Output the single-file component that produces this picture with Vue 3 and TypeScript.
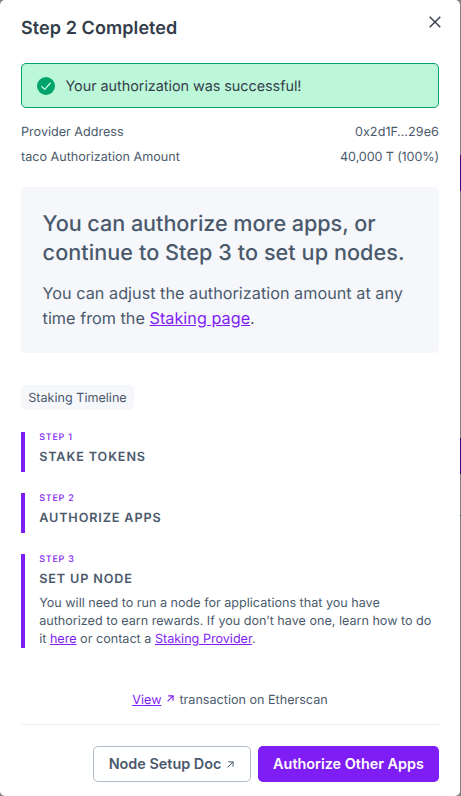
<script setup lang="ts">
interface Row {
  label: string
  value: string
  kind: 'address' | 'amount'
}

interface Step {
  label: string
  title: string
  detailed?: boolean
}

const rows: Row[] = [
  { label: 'Provider Address', value: '0x2d1F…29e6', kind: 'address' },
  { label: 'taco Authorization Amount', value: '40,000 T (100%)', kind: 'amount' },
]

const steps: Step[] = [
  { label: 'STEP 1', title: 'STAKE TOKENS' },
  { label: 'STEP 2', title: 'AUTHORIZE APPS' },
  { label: 'STEP 3', title: 'SET UP NODE', detailed: true },
]
</script>

<template>
  <div class="backdrop">
    <main class="modal">
      <header class="header">
        <h1>Step 2 Completed</h1>
        <button class="close" aria-label="Close">
          <svg viewBox="0 0 12 12" width="12" height="12">
            <path d="M.7.7 11.3 11.3M11.3.7.7 11.3" fill="none" stroke="currentColor" stroke-width="1.4" />
          </svg>
        </button>
      </header>

      <div class="alert">
        <svg viewBox="0 0 18 18" width="18" height="18">
          <circle cx="9" cy="9" r="9" fill="#00a36c" />
          <path d="M4.4 9.3 7.7 12.4 13.6 5.7" fill="none" stroke="#c6f9df" stroke-width="1.3" />
        </svg>
        <span>Your authorization was successful!</span>
      </div>

      <dl class="rows">
        <div v-for="row in rows" :key="row.label" class="row">
          <dt>{{ row.label }}</dt>
          <dd :class="row.kind">{{ row.value }}</dd>
        </div>
      </dl>

      <section class="card">
        <h2>
          <span class="lead">You can authorize more apps, or</span><br />continue to Step 3 to set up nodes.
        </h2>
        <p>You can adjust the authorization amount at any<br />time from the <a>Staking page</a>.</p>
      </section>

      <span class="badge">Staking Timeline</span>

      <ol class="timeline">
        <li v-for="step in steps" :key="step.label" class="step">
          <span class="step-label">{{ step.label }}</span>
          <h3>{{ step.title }}</h3>
          <p v-if="step.detailed">
            You will need to run a node for applications that you have<br />authorized to earn rewards. If you
            don’t have one, learn how to do<br />it <a>here</a> or contact a <a>Staking Provider</a>.
          </p>
        </li>
      </ol>

      <p class="transaction">
        <a>View</a>
        <svg class="arrow" viewBox="0 0 7 7" width="7" height="7">
          <path d="M1.2.9H6.1V5.8M6.1.9.6 6.4" fill="none" stroke="currentColor" stroke-width="1.1" />
        </svg>
        <span>transaction on Etherscan</span>
      </p>

      <footer class="footer">
        <button class="button outline">
          <span>Node Setup Doc</span>
          <svg viewBox="0 0 7 7" width="7" height="7">
            <path d="M1.2.9H6.1V5.8M6.1.9.6 6.4" fill="none" stroke="currentColor" stroke-width="1" />
          </svg>
        </button>
        <button class="button solid"><span>Authorize Other Apps</span></button>
      </footer>
    </main>
    <aside class="page-edge"><i class="block first"></i><i class="block second"></i><i class="tick"></i></aside>
  </div>
</template>

<style>
body {
  margin: 0;
  background: #808080;
}
</style>

<style scoped>
.backdrop {
  display: flex;
  width: 461px;
  height: 796px;
  overflow: hidden;
  background: #808080;
  font-family: Inter, "Liberation Sans", sans-serif;
  color: #4a5a6c;
  text-rendering: geometricPrecision;
}

.modal {
  box-sizing: border-box;
  display: flex;
  flex-direction: column;
  width: 460px;
  height: 796px;
  padding: 0 21px;
  border-radius: 5px;
  background: #fff;
}

h1,
h2,
h3,
p,
dl,
dd,
ol {
  margin: 0;
  padding: 0;
}

a {
  color: #7f1df5;
  text-decoration: underline;
}

svg {
  display: block;
  flex: none;
}

button {
  padding: 0;
  border: 0;
  background: none;
  font: inherit;
  color: inherit;
}

.header {
  display: flex;
  justify-content: space-between;
  height: 63px;
}

h1 {
  margin-top: 17px;
  font-size: 18px;
  line-height: 24px;
  font-weight: 600;
  letter-spacing: 0.08px;
  color: #323d49;
}

.close {
  align-self: flex-start;
  margin: 15.5px -2.3px 0 0;
  color: #323d49;
}

.alert {
  box-sizing: border-box;
  display: flex;
  align-items: center;
  gap: 11px;
  width: 418px;
  height: 45px;
  padding-left: 15px;
  border: 1px solid #00a36c;
  border-radius: 5px;
  background: #bdf7da;
  font-size: 14.4px;
  letter-spacing: -0.04px;
  color: #323d49;
}

.alert svg {
  margin-left: -0.5px;
}

.alert span {
  padding-top: 2px;
}

.rows {
  width: 418px;
  margin-top: 12px;
  font-size: 12.6px;
}

.row {
  display: flex;
  justify-content: space-between;
  height: 25px;
  line-height: 25px;
}

.address {
  letter-spacing: 0.08px;
}

.amount {
  letter-spacing: -0.12px;
}

.card {
  box-sizing: border-box;
  width: 418px;
  height: 166px;
  margin-top: 17px;
  padding: 23px 22px 22px 21.6px;
  border-radius: 5px;
  background: #f6f7fb;
  white-space: nowrap;
}

h2 {
  font-size: 21.6px;
  line-height: 29px;
  font-weight: 500;
  letter-spacing: 0.07px;
}

.lead {
  letter-spacing: -0.04px;
}

.card p {
  margin-top: 13px;
  font-size: 16.2px;
  line-height: 25px;
  letter-spacing: 0.03px;
}

.badge {
  align-self: flex-start;
  box-sizing: border-box;
  width: 113px;
  height: 25px;
  margin-top: 32px;
  border-radius: 5px;
  background: #f6f7fb;
  font-size: 12.6px;
  line-height: 27px;
  text-align: center;
}

.timeline {
  display: grid;
  gap: 21px;
  margin-top: 22px;
  list-style: none;
}

.step {
  box-sizing: border-box;
  min-height: 40px;
  max-height: 94px;
  padding-top: 1px;
  padding-left: 14.2px;
  border-left: 4px solid #7f1df5;
  white-space: nowrap;
}

.step-label {
  display: block;
  font-size: 9px;
  line-height: 10px;
  font-weight: 500;
  letter-spacing: 0.75px;
  color: #7f1df5;
}

h3 {
  margin-top: 6px;
  font-size: 12.6px;
  line-height: 18px;
  font-weight: 600;
  letter-spacing: 0.89px;
}

.step p {
  margin-top: 6px;
  font-size: 12.6px;
  line-height: 18px;
}

.transaction {
  display: flex;
  justify-content: center;
  width: 418px;
  margin-top: 44px;
  font-size: 12.6px;
  line-height: 18px;
}

.arrow {
  margin: 3px 5px 0 6px;
  color: #7f1df5;
}

.footer {
  display: flex;
  justify-content: flex-end;
  gap: 7px;
  width: 418px;
  margin-top: 14px;
  padding-top: 21px;
  border-top: 1px solid #e8edf4;
}

.button {
  box-sizing: border-box;
  display: flex;
  align-items: center;
  justify-content: center;
  gap: 6px;
  height: 36px;
  padding-bottom: 1px;
  border-radius: 5px;
  font-size: 14.4px;
  font-weight: 600;
  white-space: nowrap;
}

.button svg {
  margin-top: 2px;
}

.outline {
  width: 158px;
  padding-right: 1px;
  border: 1px solid #afbbcb;
}

.solid {
  width: 181px;
  background: #7f1df5;
  color: #fff;
}

.page-edge {
  display: flex;
  flex-direction: column;
  width: 1px;
  background: #808080;
}

.block {
  height: 36px;
  background: #400080;
}

.first {
  margin-top: 155px;
}

.second {
  margin-top: 247px;
}

.tick {
  height: 1px;
  margin-top: 41px;
  background: #0b5345;
}
</style>
